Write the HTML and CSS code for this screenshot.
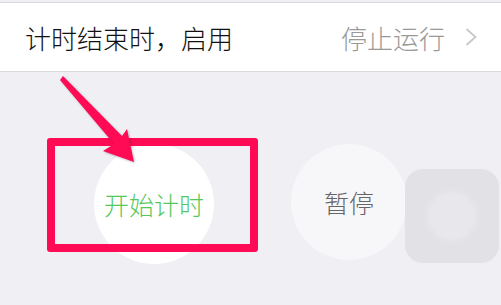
FILE: index.html
```html
<!DOCTYPE html>
<html lang="zh-CN">
<head>
    <meta charset="UTF-8">
    <meta name="viewport" content="width=device-width, initial-scale=1.0">
    <title>计时器</title>
    <link rel="stylesheet" href="styles.css">
</head>
<body>
    <div class="setting-row">
        <span class="setting-label">计时结束时，启用</span>
        <span class="setting-value">停止运行
            <svg class="chevron" width="12" height="20" viewBox="0 0 12 20"><path d="M1.5 2 L10.5 10 L1.5 18" fill="none" stroke="#c7c7cc" stroke-width="1.8"/></svg>
        </span>
    </div>

    <div class="controls">
        <div class="circle-btn start">开始计时</div>
        <div class="circle-btn pause">暂停</div>
        <div class="float-ball"><div class="float-ball-dot"></div></div>

        <!-- annotation marks -->
        <div class="highlight-box"></div>
        <svg class="arrow" width="100" height="100" viewBox="0 0 100 100">
            <path d="M10 10 L13 6 L72 66 L77 59 L84 92 L53 81 L64 74 Z" fill="#ff0a55"/>
        </svg>
    </div>
</body>
</html>
```

FILE: styles.css
```css
body { margin: 0; padding-top: 2px; background-color: #efeff4; font-family: "Noto Sans CJK SC", "Noto Sans", sans-serif; }
.setting-row { display: flex; justify-content: space-between; align-items: center; height: 68px; padding: 0 24px 0 25px; background-color: #fff; border-top: 1px solid #d9d9de; border-bottom: 1px solid #d9d9de; }
.setting-label { font-size: 26px; font-weight: 300; color: #111; }
.setting-value { display: flex; align-items: center; gap: 20px; font-size: 26px; font-weight: 300; color: #999; }
.controls { position: relative; display: flex; align-items: flex-start; height: 233px; padding-left: 94px; padding-top: 72px; box-sizing: border-box; }
.circle-btn { display: flex; justify-content: center; align-items: center; width: 120px; height: 120px; border-radius: 50%; font-size: 25px; font-weight: 300; }
.start { background-color: #fff; color: #55c85a; }
.pause { background-color: #f7f7f9; color: #666; width: 116px; height: 116px; margin-left: 77px; margin-top: 0; }
.float-ball { display: flex; justify-content: center; align-items: center; width: 94px; height: 94px; margin-left: -2px; margin-top: 25px; border-radius: 18px; background-color: #e1e1e6; }
.float-ball-dot { width: 46px; height: 46px; border-radius: 50%; background-color: #e8e8ec; box-shadow: 0 0 10px #ececf0; }
.highlight-box { position: absolute; left: 47px; top: 66px; width: 195px; height: 98px; border: 8px solid #ff0a55; border-radius: 3px; }
.arrow { position: absolute; left: 50px; top: -2px; filter: drop-shadow(1px 1px 1px rgba(0,0,0,0.25)); }
```
